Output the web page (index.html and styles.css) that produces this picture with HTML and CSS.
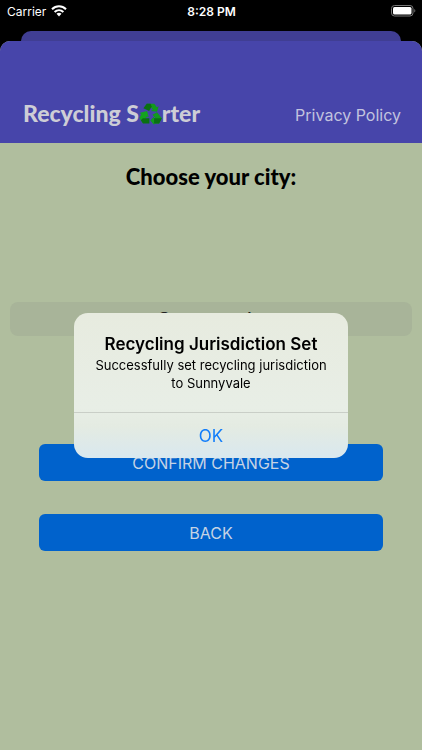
FILE: index.html
```html
<!DOCTYPE html>
<html lang="en">
<head>
    <meta charset="UTF-8">
    <meta name="viewport" content="width=device-width, initial-scale=1.0">
    <title>Recycling Sorter</title>
    <link rel="stylesheet" href="styles.css">
</head>
<body>
    <div class="status-bar">
        <div class="carrier">
            <span>Carrier</span>
            <svg width="16" height="12" viewBox="0 0 16 12" fill="none" stroke="#fff" stroke-width="2">
                <path d="M1 4.3C5 .3 11 .3 15 4.3"/>
                <path d="M3.6 7C6.2 4.5 9.8 4.5 12.4 7"/>
                <path d="M5.5 8.8C7 7.5 9 7.5 10.5 8.8L8 11.4Z" fill="#fff" stroke="none"/>
            </svg>
        </div>
        <span class="time">8:28 PM</span>
        <div class="battery">
            <svg width="25" height="12" viewBox="0 0 25 12">
                <rect x=".5" y=".5" width="21.5" height="10.5" rx="3" fill="none" stroke="#777"/>
                <rect x="2" y="2" width="18.5" height="7.5" rx="1.5" fill="#fff"/>
                <path d="M23.3 4C24.7 4.4 24.7 7.1 23.3 7.5Z" fill="#777"/>
            </svg>
        </div>
    </div>

    <div class="back-sheet"></div>
    <div class="sheet">
        <header class="header">
            <h1 class="logo">Recycling S<svg class="recycle" viewBox="0 0 24 24" role="img" aria-label="o">
                <path fill="#129a1d" d="M8 1.8H16L18.6 5.4L20.6 4.4L18.8 10.2L12.4 9.4L14.4 8.2L12 4.6Z"/>
                <path fill="#0a7012" d="M8 1.8H12L13.2 4.8L10.6 9.4L4.6 6.4Z"/>
                <path fill="#129a1d" d="M18.8 10.6L23.8 17L21 22.4H15.8V24L11.8 19.4L15.8 15V17H17.4L14 13.2Z"/>
                <path fill="#0a7012" d="M23.8 17L21 22.4H15.8V17Z"/>
                <path fill="#14a320" d="M8.4 9.4L10.2 16L8.2 15.2L7 17.4L4.2 22.4L.4 16.6L2.4 12.6L.4 11.4Z"/>
                <path fill="#0a7012" d="M10.8 17V22.4H4.2L2 19L4 17Z"/>
            </svg>rter</h1>
            <a class="policy" href="#">Privacy Policy</a>
        </header>
        <main class="content">
            <h2 class="title"><label for="city">Choose your city:</label></h2>
            <select class="picker" id="city">
                <option>Sunnyvale</option>
            </select>
            <div class="buttons">
                <button class="button">CONFIRM CHANGES</button>
                <button class="button">BACK</button>
            </div>
        </main>
    </div>

    <div class="overlay">
        <div class="alert" role="alertdialog" aria-labelledby="alert-title" aria-describedby="alert-text">
            <div class="alert-body">
                <h3 class="alert-title" id="alert-title">Recycling Jurisdiction Set</h3>
                <p class="alert-text" id="alert-text">Successfully set recycling jurisdiction to Sunnyvale</p>
            </div>
            <button class="alert-button">OK</button>
        </div>
    </div>
</body>
</html>
```
FILE: styles.css
```css
* {
    margin: 0;
    padding: 0;
    box-sizing: border-box;
}
body {
    display: flex;
    flex-direction: column;
    min-height: 100vh;
    background: #000;
    font-family: Inter, "Liberation Sans", sans-serif;
}
.status-bar {
    display: grid;
    grid-template-columns: 1fr auto 1fr;
    align-items: center;
    height: 22px;
    margin-bottom: 9px;
    padding: 0 6px 0 7px;
    color: #fff;
    font-size: 12px;
}
.carrier {
    display: flex;
    align-items: center;
    gap: 5px;
}
.time {
    font-weight: 600;
}
.battery {
    display: flex;
    justify-content: flex-end;
}
.back-sheet {
    height: 10px;
    margin: 0 21px;
    border-radius: 10px 10px 0 0;
    background: #403e93;
}
.sheet {
    display: flex;
    flex: 1;
    flex-direction: column;
    border-radius: 10px 10px 0 0;
    background: #b0be9e;
    overflow: hidden;
}
.header {
    display: flex;
    justify-content: space-between;
    align-items: flex-end;
    height: 102px;
    padding: 0 21px 17px 23px;
    background: #4745aa;
    color: #cdcdd6;
}
.logo {
    display: flex;
    align-items: center;
    font: 900 23px/26px Lato, sans-serif;
}
.recycle {
    width: 23px;
    height: 23px;
}
.policy {
    color: #c2c3df;
    font-size: 16px;
    line-height: 22px;
    text-decoration: none;
}
.content {
    display: flex;
    flex-direction: column;
    padding: 20px 10px;
}
.title {
    font: 900 22px/28px Lato, sans-serif;
    text-align: center;
}
.picker {
    width: 100%;
    height: 34px;
    margin-top: 111px;
    padding-top: 2px;
    border: none;
    border-radius: 8px;
    background: #a8b499;
    color: #222;
    font-family: inherit;
    font-size: 22px;
    text-align-last: center;
    appearance: none;
}
.buttons {
    display: flex;
    flex-direction: column;
    gap: 33px;
    margin-top: 108px;
    padding: 0 29px;
}
.button {
    height: 37px;
    border: none;
    border-radius: 6px;
    background: #0062cc;
    color: #c5d3e4;
    font-family: inherit;
    font-size: 16px;
    cursor: pointer;
}

/* Alert */
.overlay {
    position: fixed;
    inset: 21px 0 0;
    display: flex;
    justify-content: center;
    align-items: center;
}
.alert {
    width: 65%;
    max-width: 320px;
    border-radius: 14px;
    background: linear-gradient(#e7ebdf, #e8eee6 65%, #e4ebe2 78%, #d9e8ef);
    overflow: hidden;
    text-align: center;
}
.alert-body {
    padding: 20px 16px;
    border-bottom: 1px solid #c9cec7;
}
.alert-title {
    margin-bottom: 1px;
    font-size: 17px;
    font-weight: 600;
    line-height: 22px;
}
.alert-text {
    font-size: 13px;
    line-height: 18px;
}
.alert-button {
    width: 100%;
    height: 45px;
    border: none;
    background: none;
    color: #117dfa;
    font-family: inherit;
    font-size: 17px;
    cursor: pointer;
}
```
